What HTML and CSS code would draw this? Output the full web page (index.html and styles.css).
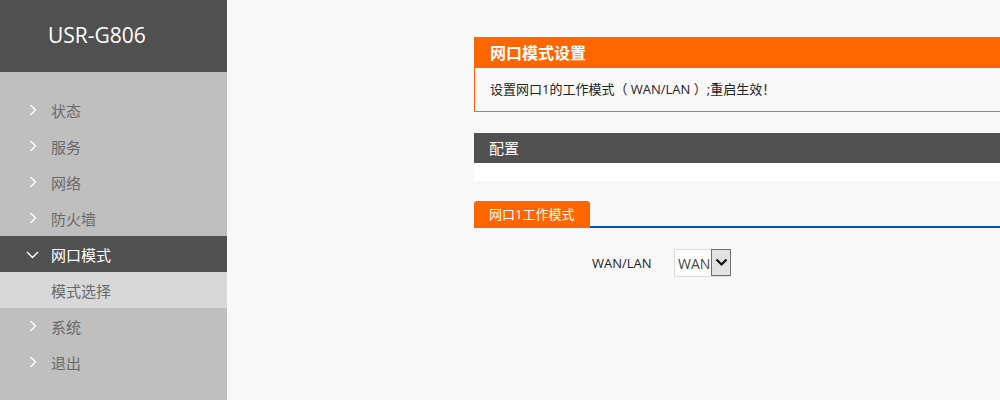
FILE: index.html
```html
<!DOCTYPE html>
<html lang="zh-CN">
<head>
<meta charset="utf-8">
<title>USR-G806</title>
<link rel="stylesheet" href="styles.css">
</head>
<body>
<div class="layout">
  <aside class="sidebar">
    <div class="brand">USR-G806</div>
    <ul class="menu">
      <li class="item"><span class="chev"><svg width="8" height="12" viewBox="0 0 8 12"><path d="M1.5 1 L6.5 6 L1.5 11" fill="none" stroke="#fff" stroke-width="1.4"/></svg></span>状态</li>
      <li class="item"><span class="chev"><svg width="8" height="12" viewBox="0 0 8 12"><path d="M1.5 1 L6.5 6 L1.5 11" fill="none" stroke="#fff" stroke-width="1.4"/></svg></span>服务</li>
      <li class="item"><span class="chev"><svg width="8" height="12" viewBox="0 0 8 12"><path d="M1.5 1 L6.5 6 L1.5 11" fill="none" stroke="#fff" stroke-width="1.4"/></svg></span>网络</li>
      <li class="item"><span class="chev"><svg width="8" height="12" viewBox="0 0 8 12"><path d="M1.5 1 L6.5 6 L1.5 11" fill="none" stroke="#fff" stroke-width="1.4"/></svg></span>防火墙</li>
      <li class="item active"><span class="chev down"><svg width="13" height="8" viewBox="0 0 13 8"><path d="M1 1 L6.5 6.5 L12 1" fill="none" stroke="#fff" stroke-width="1.4"/></svg></span>网口模式</li>
      <li class="sub">模式选择</li>
      <li class="item"><span class="chev"><svg width="8" height="12" viewBox="0 0 8 12"><path d="M1.5 1 L6.5 6 L1.5 11" fill="none" stroke="#fff" stroke-width="1.4"/></svg></span>系统</li>
      <li class="item"><span class="chev"><svg width="8" height="12" viewBox="0 0 8 12"><path d="M1.5 1 L6.5 6 L1.5 11" fill="none" stroke="#fff" stroke-width="1.4"/></svg></span>退出</li>
    </ul>
  </aside>
  <main class="main">
    <section class="notice">
      <div class="notice-head">网口模式设置</div>
      <div class="notice-body">设置网口1的工作模式（ WAN/LAN ）;重启生效！</div>
    </section>
    <section class="config">
      <div class="config-head">配置</div>
      <div class="config-body"></div>
    </section>
    <div class="tabs">
      <div class="tab">网口1工作模式</div>
      <div class="tab-line"></div>
    </div>
    <div class="form-row">
      <label class="label" for="mode">WAN/LAN</label>
      <span class="select-wrap">
        <select id="mode" class="select">
          <option>WAN</option>
          <option>LAN</option>
        </select>
        <span class="select-arrow"><svg width="13" height="9" viewBox="0 0 13 9"><path d="M1.5 1.5 L6.5 6.5 L11.5 1.5" fill="none" stroke="#111" stroke-width="2.2"/></svg></span>
      </span>
    </div>
  </main>
</div>
</body>
</html>
```
FILE: styles.css
```css
* { box-sizing: border-box; }
html, body { margin: 0; padding: 0; }
body {
  width: 1000px;
  height: 400px;
  overflow: hidden;
  background: #f8f8f8;
  font-family: "Open Sans", "Noto Sans CJK SC", "Noto Sans", sans-serif;
  color: #222;
}
.layout {
  display: flex;
  width: 1000px;
  height: 400px;
}
.sidebar {
  width: 227px;
  flex: 0 0 227px;
  background: #bfbfbf;
  height: 400px;
}
.brand {
  height: 72px;
  background: #505050;
  color: #fff;
  font-size: 21px;
  line-height: 70px;
  padding-left: 48px;
}
.menu {
  list-style: none;
  margin: 0;
  padding: 20px 0 0 0;
  font-family: "Noto Sans CJK SC", sans-serif;
}
.item, .sub {
  height: 36px;
  display: flex;
  align-items: center;
  font-size: 15px;
  color: #6a6a6a;
  padding-left: 51px;
  position: relative;
}
.chev {
  position: absolute;
  left: 29px;
  top: 12px;
  display: flex;
}
.chev.down {
  left: 26px;
  top: 15px;
}
.item.active {
  background: #505050;
  color: #fff;
}
.sub {
  background: #d8d8d8;
  color: #6a6a6a;
}
.main {
  flex: 1;
  padding: 37px 0 0 247px;
  min-width: 0;
  overflow: hidden;
}
.notice {
  margin-right: -2px;
  border: 1px solid #ff6600;
  border-top: none;
  border-right: none;
}
.notice-head {
  height: 31px;
  background: #ff6600;
  color: #fff;
  font-weight: bold;
  font-size: 16px;
  line-height: 30px;
  padding-left: 15px;
  font-family: "Noto Sans CJK SC", sans-serif;
}
.notice-body {
  height: 43px;
  font-size: 13px;
  line-height: 43px;
  padding-left: 15px;
  color: #222;
  background: #f9f9f9;
}
.config {
  margin-top: 21px;
}
.config-head {
  height: 30px;
  background: #505050;
  color: #fff;
  font-size: 15px;
  line-height: 30px;
  padding-left: 15px;
  font-family: "Noto Sans CJK SC", sans-serif;
}
.config-body {
  height: 18px;
  background: #fff;
}
.tabs {
  display: flex;
  align-items: flex-end;
  margin-top: 20px;
}
.tab {
  height: 27px;
  width: 116px;
  background: #ff6600;
  color: #fff;
  font-size: 13px;
  line-height: 27px;
  padding-left: 15px;
  border-radius: 3px 3px 0 0;
}
.tab-line {
  flex: 1;
  height: 2px;
  background: #0055aa;
}
.form-row {
  display: flex;
  align-items: center;
  margin-top: 21px;
  padding-left: 118px;
}
.label {
  font-size: 13px;
  color: #222;
  width: 82px;
}
.select-wrap {
  position: relative;
  display: inline-block;
  width: 57px;
  height: 28px;
}
.select {
  -webkit-appearance: none;
  appearance: none;
  width: 57px;
  height: 28px;
  border: 1px solid #dcdcdc;
  background: #fff;
  font-family: "Open Sans", "Noto Sans", sans-serif;
  font-size: 14px;
  color: #444;
  padding: 0 0 0 3px;
  margin: 0;
  border-radius: 0;
  outline: none;
}
.select-arrow {
  position: absolute;
  right: 0;
  top: 0;
  width: 20px;
  height: 27px;
  border: 1px solid #707070;
  background: #e2e2e2;
  display: flex;
  align-items: center;
  justify-content: center;
  pointer-events: none;
}
```
